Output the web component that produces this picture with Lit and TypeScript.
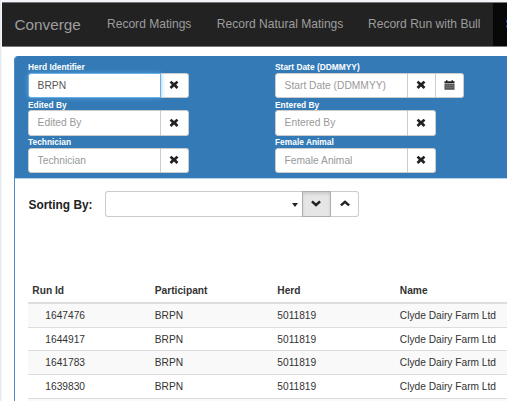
import { LitElement, html, css, svg } from "lit";
import { customElement } from "lit/decorators.js";

const cross = html`<svg class="icon" width="10" height="10" viewBox="0 0 10 10">
  <path d="M.6 2.5 2.4.7 5 3 7.6.7 9.4 2.5 7.2 4.8 9.4 7.1 7.6 8.9 5 6.6 2.4 8.9.6 7.1 2.8 4.8z" fill="#222" />
</svg>`;

const calendar = html`<svg class="icon" width="11" height="11" viewBox="0 0 11 11">
  <path d="M.5 1.2H2V.3h1.5v.9h4V.3H9v.9h1.5V3H.5z" fill="#222" />
  <path d="M.5 3.6h10v6.2H.5z" fill="#504b50" />
  ${[3, 5.5, 8].map((x) => svg`<path d="M${x} 4v5.4" stroke="#8b878b" stroke-width=".5" />`)}
  ${[5.6, 7.6].map((y) => svg`<path d="M1 ${y}h9" stroke="#8b878b" stroke-width=".5" />`)}
</svg>`;

const chevron = (down: boolean) => html`<svg class="icon" width="12" height="10" viewBox="0 0 12 10">
  <path d=${down ? "M1.9 2.4 6 6 10.1 2.4" : "M1.9 6.4 6 2.8 10.1 6.4"} fill="none" stroke="#222" stroke-width="2.5" />
</svg>`;

interface Field {
  label: string;
  value?: string;
  date?: boolean;
}

const fields: Field[] = [
  { label: "Herd Identifier", value: "BRPN" },
  { label: "Start Date (DDMMYY)", date: true },
  { label: "Edited By" },
  { label: "Entered By" },
  { label: "Technician" },
  { label: "Female Animal" },
];

const runs = ["1647476", "1644917", "1641783", "1639830"];

@customElement("app-root")
export class AppRoot extends LitElement {
  static styles = css`
    :host {
      display: block;
      box-sizing: border-box;
      width: 507px;
      height: 401px;
      overflow: hidden;
      padding: 2px 0 0 2px;
      background: linear-gradient(90deg, #e6eaf1 1px, #f3f5f9 1px);
      font: 10.2px/14px "Liberation Sans", Arial, sans-serif;
      color: #333;
    }
    * { box-sizing: border-box; }
    .page { height: 399px; background: #fff; }
    .nav {
      display: flex;
      height: 45px;
      background: #222;
      border-top: 1px solid #777;
      border-bottom: 1px solid #777;
      color: #9d9d9d;
      font-size: 12.05px;
      line-height: 43px;
      white-space: nowrap;
      overflow: hidden;
    }
    .nav > div { flex: none; }
    .brand { width: 105px; padding-left: 12.5px; font-size: 15.3px; }
    .link { width: 109.8px; }
    .link.wide { width: 151.2px; }
    .link.last { width: 125px; }
    .nav > .active { width: 60px; background: #080808; color: #2f7fe0; padding-left: 12.5px; }
    .panel {
      margin: 9px 0 0 12px;
      height: 346px;
      border-left: 1px solid #4a8bc4;
      border-top-left-radius: 4px;
      overflow: hidden;
    }
    .filters {
      height: 123px;
      background: #337ab7;
      border-bottom: 1px solid #b5d3ec;
      display: grid;
      grid-template-columns: 247px 1fr;
      grid-auto-rows: 37.5px;
      padding: 6px 0 0 13px;
    }
    .label {
      height: 10.6px;
      color: #fff;
      font-weight: bold;
      font-size: 8.4px;
      line-height: 10px;
    }
    .group { display: flex; height: 25.5px; }
    .input {
      width: 133px;
      border: 1px solid #ccc;
      border-radius: 3px 0 0 3px;
      background: #fff;
      padding-left: 8.6px;
      line-height: 23px;
      font-size: 10.25px;
      color: #999;
      white-space: nowrap;
    }
    .input.filled { color: #555; }
    .input.focus {
      border-color: #66afe9;
      box-shadow: 0 0 5px rgba(102, 175, 233, 0.7);
      position: relative;
    }
    .button {
      display: flex;
      align-items: center;
      justify-content: center;
      width: 28.2px;
      padding-right: 1px;
      border: 1px solid #ccc;
      border-left: 0;
      background: #fff;
    }
    .button:last-child { border-radius: 0 3px 3px 0; }
    .button.pressed {
      background: #e6e6e6;
      border: 1px solid #adadad;
      box-shadow: inset 0 2px 3px rgba(0, 0, 0, 0.12);
    }
    .icon { display: block; }
    .sort { display: flex; padding: 12px 0 0 13.5px; }
    .sort .button { width: 28.7px; padding-right: 0; }
    .sort-label { width: 76.5px; font-size: 11.9px; font-weight: bold; line-height: 28px; color: #222; }
    .select {
      display: flex;
      align-items: center;
      justify-content: flex-end;
      width: 197px;
      padding-right: 4px;
      border: 1px solid #ccc;
      border-right: 0;
      border-radius: 3px 0 0 3px;
    }
    .caret { border: 3.5px solid transparent; border-top: 4px solid #222; border-bottom: 0; margin-top: 2px; }
    .table { margin: 59.5px 0 0 13px; }
    .row {
      display: grid;
      grid-template-columns: 122.5px 122.5px 122.5px 1fr;
      height: 23.9px;
      padding-left: 4.3px;
      border-bottom: 1px solid #ddd;
      line-height: 23px;
      white-space: nowrap;
    }
    .row.striped { background: #f9f9f9; }
    .row.head { height: 25.2px; border-bottom: 2px solid #ddd; font-weight: bold; line-height: 24px; }
    .id { padding-left: 13px; }
  `;

  private field(f: Field) {
    return html`<div>
      <div class="label">${f.label}</div>
      <div class="group">
        <div class="input ${f.value ? "filled focus" : ""}">${f.value ?? f.label}</div>
        <div class="button">${cross}</div>
        ${f.date ? html`<div class="button">${calendar}</div>` : ""}
      </div>
    </div>`;
  }

  render() {
    return html`<div class="page">
      <div class="nav">
        <div class="brand">Converge</div>
        <div class="link">Record Matings</div>
        <div class="link wide">Record Natural Matings</div>
        <div class="link last">Record Run with Bull</div>
        <div class="active">S</div>
      </div>
      <div class="panel">
        <div class="filters">${fields.map((f) => this.field(f))}</div>
        <div class="sort">
          <div class="sort-label">Sorting By:</div>
          <div class="group">
            <div class="select"><span class="caret"></span></div>
            <div class="button pressed">${chevron(true)}</div>
            <div class="button">${chevron(false)}</div>
          </div>
        </div>
        <div class="table">
          <div class="row head">
            <div>Run Id</div><div>Participant</div><div>Herd</div><div>Name</div>
          </div>
          ${runs.map(
            (id, i) => html`<div class="row ${i % 2 ? "" : "striped"}">
              <div class="id">${id}</div><div>BRPN</div><div>5011819</div><div>Clyde Dairy Farm Ltd</div>
            </div>`
          )}
          <div class="row striped"></div>
        </div>
      </div>
    </div>`;
  }
}
